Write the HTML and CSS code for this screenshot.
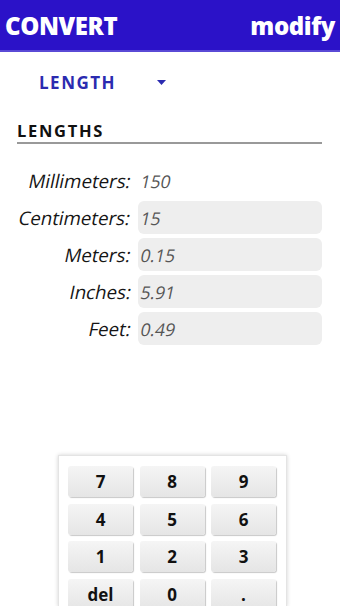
FILE: index.html
```html
<!DOCTYPE html>
<html>
<head>
<meta charset="utf-8">
<link rel="stylesheet" href="styles.css">
</head>
<body>
<header class="topbar">
  <span class="title">CONVERT</span>
  <span class="action">modify</span>
</header>
<div class="selector">
  <span class="sel-text">LENGTH</span>
  <svg class="sel-arrow" width="9" height="5" viewBox="0 0 9 5"><polygon points="0,0 9,0 4.5,5" fill="#2b2bb0"/></svg>
</div>
<div class="section">
  <div class="section-title">LENGTHS</div>
</div>
<div class="rows">
  <div class="label"><span class="slant">Millimeters:</span></div><div class="value plain"><span class="slant">150</span></div>
  <div class="label"><span class="slant">Centimeters:</span></div><div class="value"><span class="slant">15</span></div>
  <div class="label"><span class="slant">Meters:</span></div><div class="value"><span class="slant">0.15</span></div>
  <div class="label"><span class="slant">Inches:</span></div><div class="value"><span class="slant">5.91</span></div>
  <div class="label"><span class="slant">Feet:</span></div><div class="value"><span class="slant">0.49</span></div>
</div>
<div class="keypad">
  <div class="key">7</div><div class="key">8</div><div class="key">9</div>
  <div class="key">4</div><div class="key">5</div><div class="key">6</div>
  <div class="key">1</div><div class="key">2</div><div class="key">3</div>
  <div class="key">del</div><div class="key">0</div><div class="key">.</div>
</div>
</body>
</html>
```

FILE: styles.css
```css
html, body {
  margin: 0;
  padding: 0;
  background: #ffffff;
  font-family: "Open Sans", "DejaVu Sans", sans-serif;
  overflow: hidden;
  height: 606px;
}
.topbar {
  height: 50px;
  background: #2b12c8;
  border-bottom: 2px solid #5a4ad6;
  display: flex;
  justify-content: space-between;
  align-items: center;
  padding: 0 5px 0 5px;
  color: #ffffff;
  font-weight: 800;
  font-size: 24px;
  letter-spacing: -0.4px;
}
.title, .action {
  line-height: 1;
  margin-top: 1px;
}
.selector {
  display: flex;
  align-items: center;
  height: 60px;
  padding-left: 39px;
}
.sel-text {
  color: #2b2bb0;
  font-weight: 700;
  font-size: 17px;
  letter-spacing: 1.5px;
  width: 118px;
}
.sel-arrow {
  display: block;
}
.section {
  padding: 0 18px 0 18px;
}
.section-title {
  font-weight: 700;
  font-size: 16.5px;
  letter-spacing: 1.7px;
  color: #111111;
  line-height: 22px;
  padding-top: 8px;
  margin-left: -1px;
  border-bottom: 2px solid #999999;
}
.rows {
  display: grid;
  grid-template-columns: 131px 184px;
  column-gap: 7px;
  row-gap: 4px;
  margin-top: 20px;
}
.label, .value {
  height: 33px;
  display: flex;
  align-items: center;
  font-size: 17.5px;
}
.slant {
  display: inline-block;
  transform: skewX(-12deg);
}
.label {
  justify-content: flex-end;
  color: #151515;
  font-size: 18.7px;
}
.value {
  background: #eeeeee;
  border-radius: 6px;
  color: #555555;
  padding-left: 3px;
}
.value.plain {
  background: transparent;
}
.keypad {
  margin: 110px 0 0 58px;
  width: 209px;
  height: 141px;
  overflow: hidden;
  padding: 10px 9px 0 9px;
  display: grid;
  grid-template-columns: repeat(3, 65px);
  grid-auto-rows: 31px;
  gap: 6.5px 6.5px;
  box-shadow: 0 0 4px rgba(0,0,0,0.18);
  border: 1px solid #e4e4e4;
  border-bottom: none;
  box-sizing: content-box;
}
.key {
  background: linear-gradient(#f5f5f5, #e5e5e5);
  border-radius: 3px;
  box-shadow: 1px 1px 1px rgba(0,0,0,0.22);
  display: flex;
  align-items: center;
  justify-content: center;
  font-weight: 700;
  font-size: 17px;
  color: #111111;
}
```
